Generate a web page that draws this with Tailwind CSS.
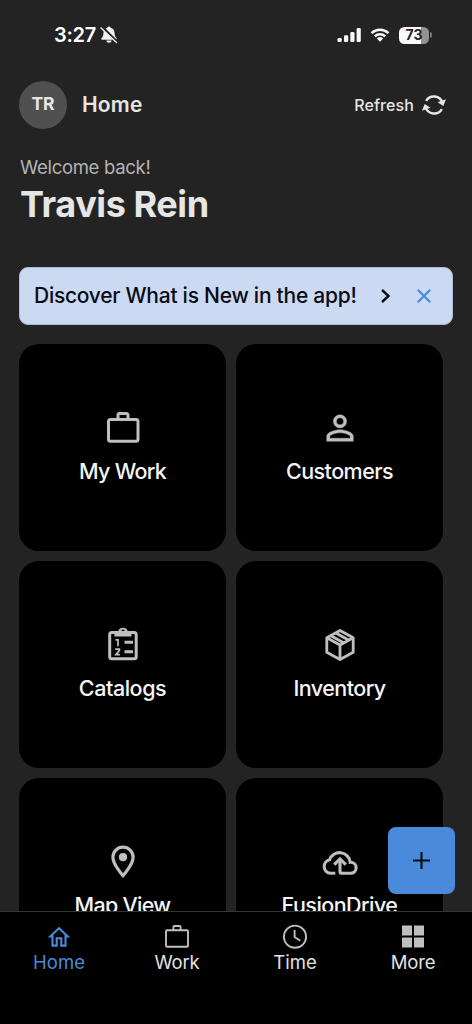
<!DOCTYPE html>
<html lang="en">
<head>
<meta charset="utf-8">
<title>Home</title>
<script src="https://cdn.jsdelivr.net/npm/@tailwindcss/browser@4"></script>
</head>
<body class="bg-[#232323] font-['Inter',sans-serif] text-[#e6e6e6]">
<div class="relative flex h-[1024px] w-[472px] flex-col overflow-hidden">
  <!-- Status bar -->
  <div class="flex h-[70px] shrink-0 items-center justify-between pr-[40px] pl-[54px]">
    <div class="flex items-center gap-[4px] text-white">
      <span class="text-[20px] leading-6 font-semibold tracking-[-0.3px]">3:27</span>
      <svg class="h-[20px] w-[18px]" viewBox="0 0 18 20"><path fill="#f2f2f2" d="M9 1.500c.9 0 1.500.6 1.600 1.300 2.500.7 3.800 2.500 3.900 5 .1 3 .9 4.300 1.900 5.200.6.600.4 1.700-.6 1.700H2.200c-1 0-1.200-1.100-.6-1.700 1-.9 1.800-2.200 1.900-5.200.1-2.500 1.400-4.300 3.900-5C7.500 2.100 8.100 1.500 9 1.500ZM6.300 15.600h5.400c-.2 1.400-1.400 2.200-2.700 2.200s-2.500-.8-2.700-2.200Z"/><path stroke="#232323" stroke-width="2.800" d="M2.500 2.500 17 17"/><path stroke="#f2f2f2" stroke-width="1.400" stroke-linecap="round" d="M1 3 16.500 17.500"/></svg>
    </div>
    <div class="flex items-center">
      <svg class="h-[16px] w-[25px]" viewBox="0 0 25 16" fill="#f7f7f7"><rect x="1.500" y="11" width="4.200" height="4" rx="1.200"/><rect x="8" y="8.300" width="4.200" height="6.700" rx="1.200"/><rect x="14.300" y="5" width="4.200" height="10" rx="1.200"/><rect x="20.600" y="1" width="4.200" height="14" rx="1.200"/></svg>
      <svg class="ml-[9px] h-[16px] w-[20px]" viewBox="0 0 22 16" fill="none" stroke="#f7f7f7" stroke-width="2.900"><path d="M1.800 5.900a13.300 13.300 0 0 1 18.400 0"/><path d="M5.300 9.500a8.300 8.300 0 0 1 11.400 0"/><path fill="#f7f7f7" stroke="none" d="M7.500 11.900a5.200 5.200 0 0 1 7 0L11 15.500Z"/></svg>
      <div class="ml-[9px] flex h-[17px] w-[30px] items-center justify-center rounded-[5.500px] bg-linear-to-r from-[#fafafa] from-73% to-[#929292] to-73% text-[14px] leading-none font-bold text-[#232323]">73</div>
      <div class="ml-[1px] h-[6px] w-[2px] rounded-r-full bg-[#777]"></div>
    </div>
  </div>

  <!-- Header -->
  <div class="mt-[10px] flex h-[49px] shrink-0 items-center pr-[26px] pl-[19px]">
    <div class="flex size-[48px] items-center justify-center rounded-full bg-[#505050] text-[17.500px] font-bold">TR</div>
    <h1 class="ml-[15px] pt-px text-[21px] leading-7 font-semibold tracking-[0.200px]">Home</h1>
    <span class="ml-auto text-[16px] font-medium tracking-[0.100px]">Refresh</span>
    <svg class="ml-[8px] h-[22px] w-[24px]" viewBox="0 0 24 22" fill="none" stroke="#e6e6e6" stroke-width="2.400"><path d="M4.100 6.900A9 9 0 0 1 20.500 9"/><path d="M19.900 15.100A9 9 0 0 1 3.500 13"/><path fill="#e6e6e6" stroke="none" d="m15.600 8.200 8.400-3-2.700 6.800ZM8.400 13.800l-8.400 3 2.700-6.800Z"/></svg>
  </div>

  <div class="mt-[26px] shrink-0 pl-[20px]">
    <p class="text-[18.500px] leading-6 tracking-[-0.300px] text-[#b4b4b4]">Welcome back!</p>
    <h2 class="mt-[3px] text-[36px] leading-[44px] font-bold tracking-[-0.420px]">Travis Rein</h2>
  </div>

  <!-- Announcement -->
  <div class="mx-[19px] mt-[41px] flex h-[58px] shrink-0 items-center rounded-[9px] border border-[#aebbd3] bg-[#ccd9f3] pl-[14px] text-[#080b12]">
    <span class="w-[324px] text-[21px] tracking-[-0.260px] whitespace-nowrap [font-weight:450]">Discover What is New in the app!</span>
    <svg class="ml-[22px] h-[16px] w-[12px]" viewBox="0 0 12 16" fill="none" stroke="#080b12" stroke-width="2.400"><path d="m2 2 6.500 6L2 14"/></svg>
    <svg class="ml-[25px] size-[14px]" viewBox="0 0 14 14" fill="none" stroke="#4a8adb" stroke-width="2.100"><path d="m.7.700 12.600 12.600M13.300.7.700 13.300"/></svg>
  </div>

  <!-- Tiles -->
  <div class="mt-[19px] grid shrink-0 grid-cols-[207px_207px] gap-[10px] pl-[19px] text-[21.500px] leading-7 font-medium tracking-[-0.550px] text-[#f5f5f5]">
    <div class="flex h-[207px] flex-col items-center rounded-[20px] bg-black pt-[64px]">
      <svg class="size-[40px]" viewBox="0 0 40 40" fill="none" stroke="#bfbfbf" stroke-width="3"><rect x="5.500" y="11.600" width="29.500" height="21.700" rx="2"/><path d="M15 11.500V7a1.500 1.500 0 0 1 1.500-1.500h7A1.500 1.500 0 0 1 25 7v4.500"/></svg>
      <span class="mt-[9px] tracking-[-0.700px]">My Work</span>
    </div>
    <div class="flex h-[207px] flex-col items-center rounded-[20px] bg-black pt-[64px]">
      <svg class="size-[40px]" viewBox="0 0 24 24" fill="#bfbfbf" stroke="#bfbfbf" stroke-width="0.200"><path d="M12 5.900a2.100 2.100 0 1 1 0 4.200 2.100 2.100 0 0 1 0-4.200m0 9c2.970 0 6.100 1.460 6.100 2.100v1.100H5.900V17c0-.64 3.130-2.100 6.100-2.100M12 4C9.790 4 8 5.790 8 8s1.790 4 4 4 4-1.790 4-4-1.790-4-4-4m0 9c-2.670 0-8 1.340-8 4v3h16v-3c0-2.660-5.330-4-8-4"/></svg>
      <span class="mt-[9px]">Customers</span>
    </div>
    <div class="flex h-[207px] flex-col items-center rounded-[20px] bg-black pt-[64px]">
      <svg class="size-[40px]" viewBox="0 0 40 40" fill="none" stroke="#bfbfbf" stroke-width="3"><rect x="6.700" y="7.500" width="26.500" height="26.300" rx="2"/><path fill="#bfbfbf" stroke="none" fill-rule="evenodd" d="M11.500 6H15.300a5 5 0 0 1 9.400 0H28.500v5.500H11.500ZM20 4.600a1.700 1.700 0 1 0 .01 0Z"/><path d="M21.500 17.200H30M21.500 26.700H30"/><path stroke-width="1.700" d="M12.500 14.800H15v6.400M12.200 24.200h4.200v1.200l-3.500 4.200h4"/></svg>
      <span class="mt-[9px] tracking-[-0.450px]">Catalogs</span>
    </div>
    <div class="flex h-[207px] flex-col items-center rounded-[20px] bg-black pt-[64px]">
      <svg class="size-[40px]" viewBox="0 0 40 40" fill="none" stroke="#bfbfbf" stroke-width="2.800" stroke-linejoin="round"><path d="M20 5.500 33.200 12.800v14.500L20 34.600 6.800 27.300V12.800Z"/><path d="M6.800 12.800 20 20.100l13.200-7.300M20 20.100v14.500M15.900 8l13 7.200M10.900 10.800l13 7.200"/></svg>
      <span class="mt-[9px]">Inventory</span>
    </div>
    <div class="flex h-[207px] flex-col items-center rounded-[20px] bg-black pt-[64px]">
      <svg class="size-[40px]" viewBox="0 0 40 40" fill="none" stroke="#bfbfbf" stroke-width="3.200"><path d="M20 5.100a10.100 10.100 0 0 0-10.100 10.100C9.900 22.500 20 33.700 20 33.700S30.100 22.500 30.100 15.200A10.100 10.100 0 0 0 20 5.100Z"/><circle cx="20" cy="15.200" r="4.100" fill="#bfbfbf" stroke="none"/></svg>
      <span class="mt-[9px] tracking-[-0.700px]">Map View</span>
    </div>
    <div class="flex h-[207px] flex-col items-center rounded-[20px] bg-black pt-[64px]">
      <svg class="size-[40px]" viewBox="0 0 40 40" fill="none" stroke="#bfbfbf" stroke-width="3.100"><path d="M15.300 31.300H10.500a6.900 6.900 0 0 1-1-13.600A10.700 10.700 0 0 1 30.200 20.300 5.500 5.500 0 0 1 31 31.300H21.500A1.500 1.500 0 0 1 20 29.800V18"/><path d="m14.200 22.700 5.800-5.800 5.800 5.800"/></svg>
      <span class="mt-[9px]">FusionDrive</span>
    </div>
  </div>

  <!-- Floating action button -->
  <button class="absolute top-[827px] left-[388px] flex size-[67px] items-center justify-center rounded-[8px] bg-[#4a8adb]">
    <svg class="size-[17px]" viewBox="0 0 17 17" stroke="#080d16" stroke-width="2.100"><path d="M8.500 0v17M0 8.500h17"/></svg>
  </button>

  <!-- Tab bar -->
  <nav class="absolute inset-x-0 bottom-0 grid h-[113px] grid-cols-4 border-t border-[#363636] bg-black pt-[12px] text-[18.500px] leading-6 text-[#e3e3e3]">
    <div class="flex flex-col items-center text-[#4a8adb]">
      <svg class="size-[26px]" viewBox="0 0 26 26" fill="none" stroke="currentColor" stroke-width="2.100"><path d="M4.300 12.400 13 4.100l8.700 8.300h-2.200v9.200h-4.200v-7.300h-4.600v7.300H6.500v-9.200Z"/></svg>
      <span>Home</span>
    </div>
    <div class="flex flex-col items-center">
      <svg class="size-[26px]" viewBox="0 0 26 26" fill="none" stroke="#bfbfbf" stroke-width="1.900"><rect x="2" y="6.200" width="22" height="16.600" rx="1"/><path d="M9.400 6.200V3a1 1 0 0 1 1-1h5.200a1 1 0 0 1 1 1v3.200"/></svg>
      <span class="tracking-[-0.200px]">Work</span>
    </div>
    <div class="flex flex-col items-center">
      <svg class="size-[26px]" viewBox="0 0 26 26" fill="none" stroke="#bfbfbf" stroke-width="1.900"><circle cx="13" cy="12.700" r="11.100"/><path d="M12.600 6.100v7l5.700 3.600"/></svg>
      <span>Time</span>
    </div>
    <div class="flex flex-col items-center">
      <svg class="size-[26px]" viewBox="0 0 26 26" fill="#bfbfbf"><path d="M2 1.500h10v10H2zM14 1.500h10v10H14zM2 13.500h10v10H2zM14 13.500h10v10H14z"/></svg>
      <span class="tracking-[-0.200px]">More</span>
    </div>
  </nav>
</div>
</body>
</html>
